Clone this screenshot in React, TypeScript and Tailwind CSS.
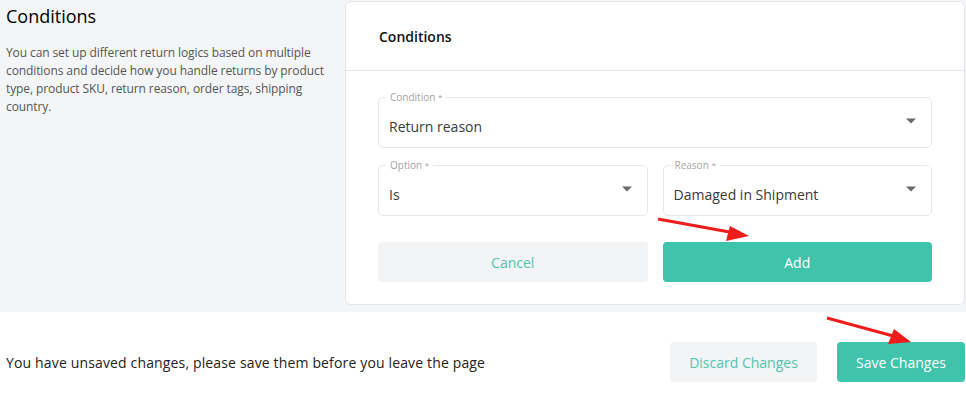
import React from 'react';

const font = { fontFamily: '"Open Sans", "Liberation Sans", sans-serif' };

const Caret = () => (
  <svg width="10" height="6" viewBox="0 0 10 5" className="text-[#6b6b6b]">
    <path d="M0 0 L10 0 L5 5 Z" fill="currentColor" />
  </svg>
);

const SelectField = ({ label, value }: { label: string; value: string }) => (
  <div className="relative h-[51px] flex-1 rounded-[5px] border border-[#e6e7ea] bg-white flex items-center justify-between pl-[10px] pr-[15px]">
    <span className="absolute -top-[8px] left-[7px] bg-white px-[4px] text-[10px] leading-[14px] text-[#a3a3a3]">
      {label} <span className="text-[8px] align-top">*</span>
    </span>
    <span className="text-[14px] text-[#3a3a3a] pt-[7px]">{value}</span>
    <span className="-mt-[3px]"><Caret /></span>
  </div>
);

export default function App() {
  return (
    <div className="relative w-[966px] h-[407px] bg-white overflow-hidden" style={font}>
      <div className="flex h-[312px] bg-[#f4f5f7]">
        <div className="w-[345px] shrink-0 pl-[6px] pr-[9px]">
          <h2 className="text-[18px] leading-[24px] font-medium text-black mt-[4px]">Conditions</h2>
          <p className="mt-[16px] text-[12px] leading-[18px] tracking-[-0.1px] text-[#555]">
            You can set up different return logics based on multiple conditions and decide how you handle returns by product type, product SKU, return reason, order tags, shipping country.
          </p>
        </div>
        <div className="mt-[1px] mb-[7px] w-[620px] rounded-[6px] border border-[#e2e5ea] bg-white flex flex-col">
          <div className="h-[69px] border-b border-[#e2e5ea] flex items-center pl-[33px]">
            <span className="text-[14px] font-semibold text-[#111]">Conditions</span>
          </div>
          <div className="px-[32px] pt-[26px] flex flex-col">
            <div className="flex">
              <SelectField label="Condition" value="Return reason" />
            </div>
            <div className="flex gap-[15px] mt-[17px]">
              <SelectField label="Option" value="Is" />
              <SelectField label="Reason" value="Damaged in Shipment" />
            </div>
            <div className="flex gap-[15px] mt-[26px]">
              <button className="flex-1 h-[40px] rounded-[4px] bg-[#f3f4f6] text-[14px] text-[#52c4ad]">Cancel</button>
              <button className="flex-1 h-[40px] rounded-[4px] bg-[#3fc3ab] text-[14px] text-white font-medium">Add</button>
            </div>
          </div>
        </div>
      </div>
      <div className="flex items-center justify-between h-[100px] pl-[6px] pr-[1px]">
        <span className="text-[14px] tracking-[0.15px] text-[#222]">You have unsaved changes, please save them before you leave the page</span>
        <div className="flex gap-[20px]">
          <button className="h-[40px] w-[147px] rounded-[4px] bg-[#f3f4f6] text-[14px] text-[#52c4ad]">Discard Changes</button>
          <button className="h-[40px] w-[128px] rounded-[4px] bg-[#3fc3ab] text-[14px] text-white">Save Changes</button>
        </div>
      </div>
      <svg className="absolute inset-0 pointer-events-none" width="966" height="407">
        <line x1="658" y1="219" x2="735" y2="233" stroke="#f01b1b" strokeWidth="3" />
        <polygon points="749,236 730,226 726,241" fill="#f01b1b" />
        <line x1="827" y1="318" x2="897" y2="337" stroke="#f01b1b" strokeWidth="3" />
        <polygon points="911,342 894,329 888,344" fill="#f01b1b" />
      </svg>
    </div>
  );
}
